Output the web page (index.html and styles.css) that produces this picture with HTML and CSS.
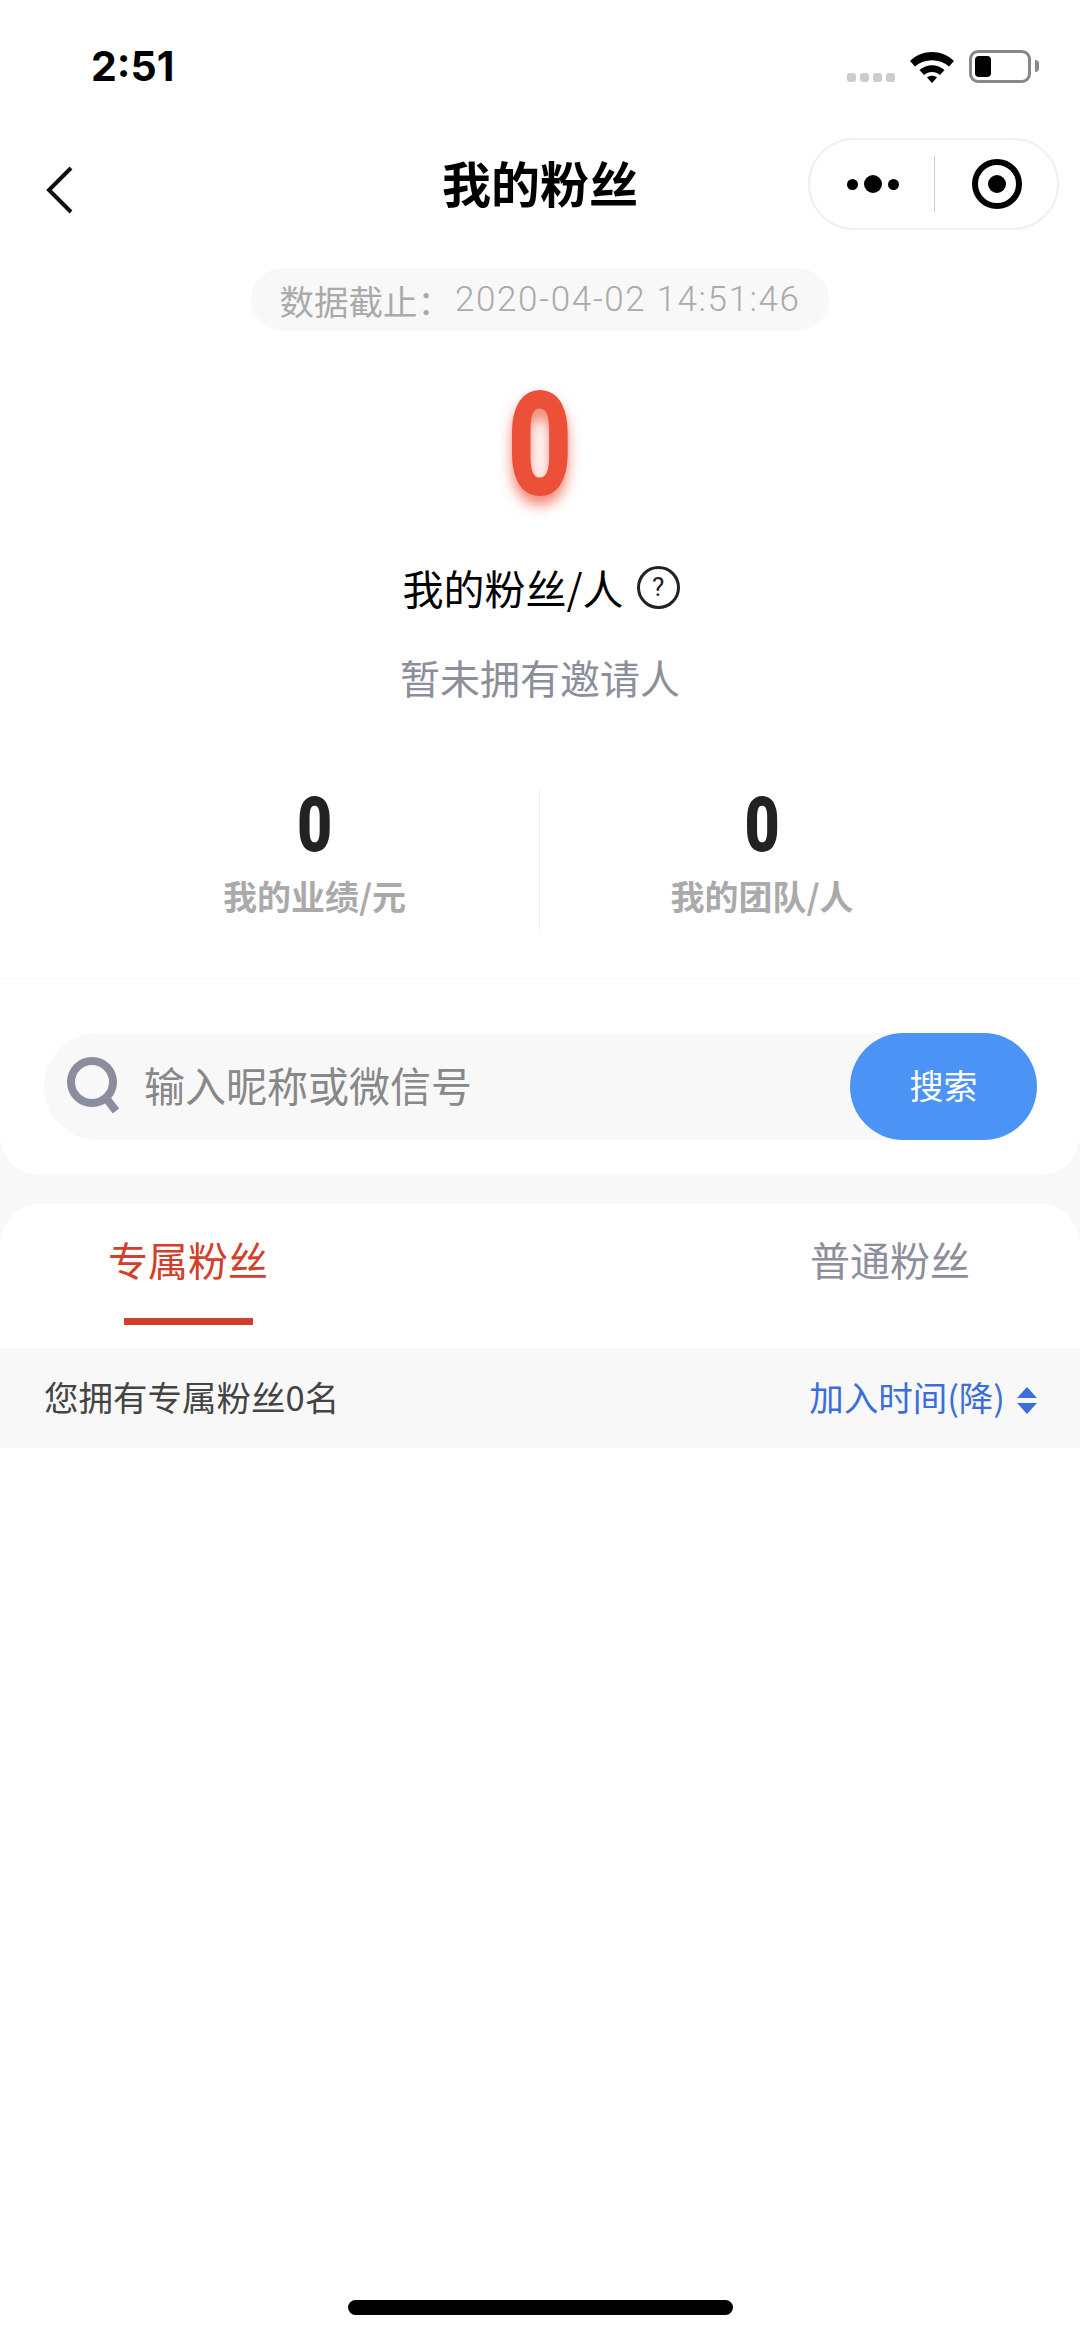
FILE: index.html
```html
<!DOCTYPE html>
<html lang="zh-CN">
<head>
    <meta charset="UTF-8">
    <title>我的粉丝</title>
    <link rel="stylesheet" href="styles.css">
</head>
<body>
    <div class="page">
        <div class="top-card">
            <div class="status-bar">
                <span class="time">2:51</span>
                <div class="status-icons">
                    <div class="signal"><i></i><i></i><i></i><i></i></div>
                    <svg class="wifi" width="44" height="33" viewBox="0 0 44 33">
                        <path d="M0 11C12 -1 32 -1 44 11L39 16.500C29.500 8 14.500 8 5 16.500Z" fill="#000"/>
                        <path d="M9.500 20C16.500 13.500 27.500 13.500 34.500 20L30 25C25.500 21 18.500 21 14 25Z" fill="#000"/>
                        <path d="M17 27.500C19.800 25.300 24.200 25.300 27 27.500L22 33Z" fill="#000"/>
                    </svg>
                    <div class="battery"><div class="battery-fill"></div></div>
                    <div class="battery-tip"></div>
                </div>
            </div>

            <div class="nav-bar">
                <svg class="back" width="28" height="48" viewBox="0 0 28 48">
                    <path d="M25 2L3 24L25 46" fill="none" stroke="#111" stroke-width="4"/>
                </svg>
                <h1 class="nav-title">我的粉丝</h1>
                <div class="capsule">
                    <div class="capsule-dots"><i></i><i class="big"></i><i></i></div>
                    <div class="capsule-line"></div>
                    <div class="capsule-target"><i></i></div>
                </div>
            </div>

            <div class="date-row">
                <div class="date-pill"><span class="date-cn">数据截止：</span><span class="date-num">2020-04-02 14:51:46</span></div>
            </div>

            <div class="hero">
                <div class="hero-num">0</div>
                <div class="hero-label">
                    <span>我的粉丝/人</span>
                    <span class="help">?</span>
                </div>
                <div class="hero-note">暂未拥有邀请人</div>
            </div>

            <div class="stats">
                <div class="stat">
                    <div class="stat-num">0</div>
                    <div class="stat-label">我的业绩/元</div>
                </div>
                <div class="stat">
                    <div class="stat-num">0</div>
                    <div class="stat-label">我的团队/人</div>
                </div>
            </div>

            <div class="search">
                <svg class="search-icon" width="58" height="58" viewBox="0 0 58 58">
                    <circle cx="27" cy="26" r="21" fill="none" stroke="#8a8e9c" stroke-width="8"/>
                    <path d="M41 42L51 55" fill="none" stroke="#8a8e9c" stroke-width="8"/>
                </svg>
                <span class="search-text">输入昵称或微信号</span>
                <div class="search-btn">搜索</div>
            </div>
        </div>

        <div class="list-card">
            <div class="tabs">
                <div class="tab active">专属粉丝</div>
                <div class="tab">普通粉丝</div>
            </div>
            <div class="sort-bar">
                <span class="sort-count">您拥有专属粉丝0名</span>
                <div class="sort-btn">
                    <span>加入时间(降)</span>
                    <div class="sort-arrows"><i class="up"></i><i class="down"></i></div>
                </div>
            </div>
            <div class="list-body"></div>
            <div class="home-bar"></div>
        </div>
    </div>
</body>
</html>
```

FILE: styles.css
```css
* {
    box-sizing: border-box;
}
body {
    margin: 0;
    background-color: #f8f8f8;
    font-family: "Noto Sans CJK SC", Roboto, sans-serif;
}
i {
    display: block;
}
.page {
    width: 1080px;
    height: 2339px;
    display: flex;
    flex-direction: column;
    overflow: hidden;
}

/* top card */
.top-card {
    height: 1175px;
    background-color: #fff;
    border-radius: 0 0 40px 40px;
}
.status-bar {
    height: 132px;
    display: flex;
    justify-content: space-between;
    align-items: center;
    padding: 0 41px 0 91px;
}
.time {
    font-family: Inter, Roboto, sans-serif;
    font-size: 41px;
    font-weight: 700;
    color: #000;
}
.status-icons {
    display: flex;
    align-items: center;
}
.signal {
    display: flex;
    gap: 4px;
    margin: 22px 15px 0 0;
}
.signal i {
    width: 9px;
    height: 9px;
    border-radius: 3px;
    background-color: #ccc;
}
.wifi {
    margin-right: 15px;
}
.battery {
    width: 62px;
    height: 33px;
    border: 3px solid #888;
    border-radius: 9px;
    padding: 3px;
}
.battery-fill {
    width: 16px;
    height: 100%;
    background-color: #000;
    border-radius: 4px;
}
.battery-tip {
    width: 4px;
    height: 12px;
    margin-left: 4px;
    background-color: #888;
    border-radius: 0 4px 4px 0;
}

/* nav */
.nav-bar {
    height: 108px;
    display: grid;
    grid-template-columns: 1fr auto 1fr;
    align-items: center;
    padding: 0 21px;
}
.back {
    margin: 8px 0 0 25px;
}
.nav-title {
    margin: -9px 0 0;
    font-size: 49px;
    font-weight: 700;
    color: #000;
}
.capsule {
    justify-self: end;
    width: 251px;
    height: 92px;
    margin-top: -4px;
    border: 2px solid #f0f0f0;
    border-radius: 46px;
    display: flex;
    align-items: center;
}
.capsule-dots {
    width: 124px;
    display: flex;
    justify-content: center;
    align-items: center;
    gap: 6px;
    padding-left: 1px;
}
.capsule-dots i {
    width: 11px;
    height: 11px;
    background-color: #000;
    border-radius: 50%;
}
.capsule-dots i.big {
    width: 18px;
    height: 18px;
}
.capsule-line {
    width: 1px;
    height: 56px;
    background-color: #ccc;
}
.capsule-target {
    width: 50px;
    height: 50px;
    margin-left: 37px;
    border: 6px solid #000;
    border-radius: 50%;
    display: flex;
    justify-content: center;
    align-items: center;
}
.capsule-target i {
    width: 18px;
    height: 18px;
    background-color: #000;
    border-radius: 50%;
}

/* date */
.date-row {
    display: flex;
    justify-content: center;
    padding-top: 28px;
}
.date-pill {
    width: 578px;
    height: 63px;
    background-color: #f8f8f8;
    border-radius: 32px;
    display: flex;
    justify-content: center;
    align-items: center;
    font-size: 34.5px;
    color: #aaa;
}
.date-num {
    font-family: Roboto, sans-serif;
    font-size: 35px;
    font-weight: 300;
    letter-spacing: 1.6px;
    margin-left: 3px;
}

/* hero */
.hero {
    display: flex;
    flex-direction: column;
    align-items: center;
    padding-top: 45px;
}
.hero-num {
    font-family: Roboto, sans-serif;
    font-size: 144px;
    font-weight: 900;
    line-height: 140px;
    color: #ec5039;
    transform: scaleX(.78);
    text-shadow: 0 9px 14px rgba(236, 80, 57, .7);
}
.hero-label {
    display: flex;
    align-items: center;
    margin-top: 41px;
    height: 60px;
    font-size: 41px;
    color: #000;
    padding-left: 2px;
}
.help {
    width: 43px;
    height: 43px;
    margin-left: 13px;
    border: 3px solid #222;
    border-radius: 50%;
    display: flex;
    justify-content: center;
    align-items: center;
    font-family: Roboto, sans-serif;
    font-size: 26px;
    color: #222;
}
.hero-note {
    margin-top: 30px;
    line-height: 60px;
    font-size: 40px;
    color: #8c8f9b;
}

/* stats */
.stats {
    height: 190px;
    margin-top: 82px;
    display: grid;
    grid-template-columns: 1fr 1fr;
    align-content: start;
    border-bottom: 1px solid #f8f8f8;
}
.stat {
    height: 145px;
    text-align: center;
}
.stat:first-child {
    padding-left: 90px;
    border-right: 1px solid #f2f2f2;
}
.stat:last-child {
    padding-right: 96px;
}
.stat-num {
    font-family: Roboto, sans-serif;
    font-size: 76px;
    font-weight: 900;
    line-height: 72px;
    color: #222;
    transform: scaleX(.8);
}
.stat-label {
    margin-top: 8px;
    line-height: 54px;
    font-size: 34px;
    font-weight: 700;
    color: #aaa;
}

/* search */
.search {
    height: 107px;
    margin: 54px 43px 0 44px;
    background-color: #f8f8f8;
    border-radius: 54px;
    display: flex;
    align-items: center;
    padding-left: 21px;
}
.search-icon {
    flex: none;
    margin-top: -3px;
}
.search-text {
    flex: 1;
    margin-left: 21px;
    padding-bottom: 5px;
    font-size: 41px;
    color: #888;
}
.search-btn {
    width: 187px;
    height: 107px;
    padding-bottom: 4px;
    background-color: #4b93f5;
    border-radius: 54px;
    display: flex;
    justify-content: center;
    align-items: center;
    font-size: 34px;
    color: #fff;
}

/* list */
.list-card {
    flex: 1;
    margin-top: 29px;
    background-color: #fff;
    border-radius: 40px 40px 0 0;
    display: flex;
    flex-direction: column;
}
.tabs {
    height: 144px;
    display: flex;
    justify-content: space-between;
    padding: 0 110px 0 108px;
}
.tab {
    position: relative;
    padding-top: 25px;
    line-height: 60px;
    font-size: 40px;
    color: #8c8e9b;
}
.tab.active {
    color: #d0402c;
}
.tab.active::after {
    content: "";
    position: absolute;
    left: 16px;
    width: 129px;
    top: 114px;
    height: 7px;
    background-color: #cf3f2b;
}
.sort-bar {
    height: 100px;
    background-color: #f8f8f8;
    display: flex;
    justify-content: space-between;
    align-items: center;
    padding: 0 43px 5px 44px;
    font-size: 34.5px;
}
.sort-count {
    color: #444;
}
.sort-btn {
    display: flex;
    align-items: center;
    color: #3a6fdb;
}
.sort-arrows {
    display: flex;
    flex-direction: column;
    gap: 5px;
    margin-left: 12px;
    margin-top: 9px;
}
.sort-arrows i {
    width: 0;
    height: 0;
    border-left: 10px solid transparent;
    border-right: 10px solid transparent;
}
.sort-arrows i.up {
    border-bottom: 11px solid #3a6fdb;
}
.sort-arrows i.down {
    border-top: 11px solid #3a6fdb;
}
.list-body {
    flex: 1;
}
.home-bar {
    width: 385px;
    height: 15px;
    margin: 0 auto 24px;
    background-color: #000;
    border-radius: 8px;
}
```
